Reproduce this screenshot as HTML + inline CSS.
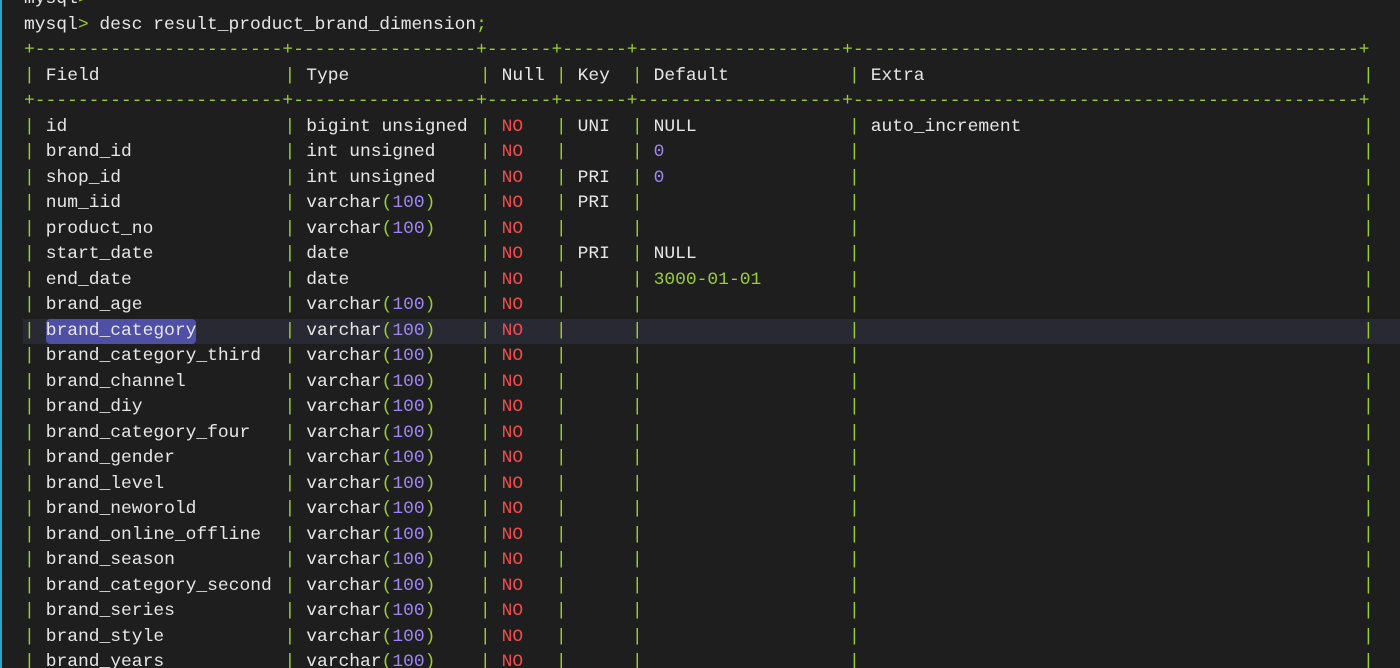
<!DOCTYPE html>
<html><head><meta charset="utf-8"><style>
html,body{margin:0;padding:0;background:#1e1e1e;width:1400px;height:668px;overflow:hidden}
body{position:relative;font-family:"Liberation Mono",monospace;font-size:17.95px;color:#e6e6e6}
.edge{position:absolute;left:0;top:0;width:2px;height:668px;background:#2fa3c6}
.w{position:absolute;left:0;top:3px;width:1400px;height:668px}
.r{position:absolute;left:0;width:1400px;height:25.5px;line-height:25.5px;white-space:pre}
.r span{position:absolute;top:0}
.g{color:#9acd32}.red{color:#f14c4c}.p{color:#9f87f5}
b{font-weight:normal}
.b0,.b1,.b2,.b3,.b4,.b5,.b6{color:#9acd32}
.b0{left:24px}.b1{left:284.5px}.b2{left:479.9px}.b3{left:555.9px}.b4{left:631.9px}.b5{left:849px}.b6{left:1363px}
.f{left:45.7px}.t{left:306.2px}.n{left:501.6px}.k{left:577.6px}.d{left:653.6px}.e{left:870.7px}
.hl{background:#292933}
.sel{background:#4f4fa6;border-radius:4px}
</style></head><body>
<div class="edge"></div>
<div class="w">
<div class="r" style="top:-16px"><span style="left:24px">mysql<span class="g" style="position:static">&gt;</span></span></div>
<div class="r" style="top:9.5px"><span style="left:24px">mysql<span class="g" style="position:static">&gt;</span> desc result_product_brand_dimension<span class="g" style="position:static">;</span></span></div>
<div class="r g" style="top:35px"><span style="left:24px">+-----------------------+-----------------+------+------+-------------------+-----------------------------------------------+</span></div>
<div class="r" style="top:60.5px"><span class="b0">|</span><span class="f">Field</span><span class="b1">|</span><span class="t">Type</span><span class="b2">|</span><span class="n">Null</span><span class="b3">|</span><span class="k">Key</span><span class="b4">|</span><span class="d">Default</span><span class="b5">|</span><span class="e">Extra</span><span class="b6">|</span></div>
<div class="r g" style="top:86px"><span style="left:24px">+-----------------------+-----------------+------+------+-------------------+-----------------------------------------------+</span></div>

<div class="r" style="top:111.5px"><span class="b0">|</span><span class="f">id</span><span class="b1">|</span><span class="t">bigint unsigned</span><span class="b2">|</span><span class="n red">NO</span><span class="b3">|</span><span class="k">UNI</span><span class="b4">|</span><span class="d">NULL</span><span class="b5">|</span><span class="e">auto_increment</span><span class="b6">|</span></div>
<div class="r" style="top:137px"><span class="b0">|</span><span class="f">brand_id</span><span class="b1">|</span><span class="t">int unsigned</span><span class="b2">|</span><span class="n red">NO</span><span class="b3">|</span><span class="b4">|</span><span class="d p">0</span><span class="b5">|</span><span class="b6">|</span></div>
<div class="r" style="top:162.5px"><span class="b0">|</span><span class="f">shop_id</span><span class="b1">|</span><span class="t">int unsigned</span><span class="b2">|</span><span class="n red">NO</span><span class="b3">|</span><span class="k">PRI</span><span class="b4">|</span><span class="d p">0</span><span class="b5">|</span><span class="b6">|</span></div>
<div class="r" style="top:188px"><span class="b0">|</span><span class="f">num_iid</span><span class="b1">|</span><span class="t">varchar<b class="g">(</b><b class="p">100</b><b class="g">)</b></span><span class="b2">|</span><span class="n red">NO</span><span class="b3">|</span><span class="k">PRI</span><span class="b4">|</span><span class="b5">|</span><span class="b6">|</span></div>
<div class="r" style="top:213.5px"><span class="b0">|</span><span class="f">product_no</span><span class="b1">|</span><span class="t">varchar<b class="g">(</b><b class="p">100</b><b class="g">)</b></span><span class="b2">|</span><span class="n red">NO</span><span class="b3">|</span><span class="b4">|</span><span class="b5">|</span><span class="b6">|</span></div>
<div class="r" style="top:239px"><span class="b0">|</span><span class="f">start_date</span><span class="b1">|</span><span class="t">date</span><span class="b2">|</span><span class="n red">NO</span><span class="b3">|</span><span class="k">PRI</span><span class="b4">|</span><span class="d">NULL</span><span class="b5">|</span><span class="b6">|</span></div>
<div class="r" style="top:264.5px"><span class="b0">|</span><span class="f">end_date</span><span class="b1">|</span><span class="t">date</span><span class="b2">|</span><span class="n red">NO</span><span class="b3">|</span><span class="b4">|</span><span class="d g">3000-01-01</span><span class="b5">|</span><span class="b6">|</span></div>
<div class="r" style="top:290px"><span class="b0">|</span><span class="f">brand_age</span><span class="b1">|</span><span class="t">varchar<b class="g">(</b><b class="p">100</b><b class="g">)</b></span><span class="b2">|</span><span class="n red">NO</span><span class="b3">|</span><span class="b4">|</span><span class="b5">|</span><span class="b6">|</span></div>
<div class="r hl" style="top:315.5px;left:23px;width:1377px"><span class="b0" style="left:1px">|</span><span class="f sel" style="left:22.7px">brand_category</span><span class="b1" style="left:261.5px">|</span><span class="t" style="left:283.2px">varchar<b class="g">(</b><b class="p">100</b><b class="g">)</b></span><span class="b2" style="left:456.9px">|</span><span class="n red" style="left:478.6px">NO</span><span class="b3" style="left:532.9px">|</span><span class="b4" style="left:608.9px">|</span><span class="b5" style="left:826px">|</span><span class="b6" style="left:1340px">|</span></div>
<div class="r" style="top:341px"><span class="b0">|</span><span class="f">brand_category_third</span><span class="b1">|</span><span class="t">varchar<b class="g">(</b><b class="p">100</b><b class="g">)</b></span><span class="b2">|</span><span class="n red">NO</span><span class="b3">|</span><span class="b4">|</span><span class="b5">|</span><span class="b6">|</span></div>
<div class="r" style="top:366.5px"><span class="b0">|</span><span class="f">brand_channel</span><span class="b1">|</span><span class="t">varchar<b class="g">(</b><b class="p">100</b><b class="g">)</b></span><span class="b2">|</span><span class="n red">NO</span><span class="b3">|</span><span class="b4">|</span><span class="b5">|</span><span class="b6">|</span></div>
<div class="r" style="top:392px"><span class="b0">|</span><span class="f">brand_diy</span><span class="b1">|</span><span class="t">varchar<b class="g">(</b><b class="p">100</b><b class="g">)</b></span><span class="b2">|</span><span class="n red">NO</span><span class="b3">|</span><span class="b4">|</span><span class="b5">|</span><span class="b6">|</span></div>
<div class="r" style="top:417.5px"><span class="b0">|</span><span class="f">brand_category_four</span><span class="b1">|</span><span class="t">varchar<b class="g">(</b><b class="p">100</b><b class="g">)</b></span><span class="b2">|</span><span class="n red">NO</span><span class="b3">|</span><span class="b4">|</span><span class="b5">|</span><span class="b6">|</span></div>
<div class="r" style="top:443px"><span class="b0">|</span><span class="f">brand_gender</span><span class="b1">|</span><span class="t">varchar<b class="g">(</b><b class="p">100</b><b class="g">)</b></span><span class="b2">|</span><span class="n red">NO</span><span class="b3">|</span><span class="b4">|</span><span class="b5">|</span><span class="b6">|</span></div>
<div class="r" style="top:468.5px"><span class="b0">|</span><span class="f">brand_level</span><span class="b1">|</span><span class="t">varchar<b class="g">(</b><b class="p">100</b><b class="g">)</b></span><span class="b2">|</span><span class="n red">NO</span><span class="b3">|</span><span class="b4">|</span><span class="b5">|</span><span class="b6">|</span></div>
<div class="r" style="top:494px"><span class="b0">|</span><span class="f">brand_neworold</span><span class="b1">|</span><span class="t">varchar<b class="g">(</b><b class="p">100</b><b class="g">)</b></span><span class="b2">|</span><span class="n red">NO</span><span class="b3">|</span><span class="b4">|</span><span class="b5">|</span><span class="b6">|</span></div>
<div class="r" style="top:519.5px"><span class="b0">|</span><span class="f">brand_online_offline</span><span class="b1">|</span><span class="t">varchar<b class="g">(</b><b class="p">100</b><b class="g">)</b></span><span class="b2">|</span><span class="n red">NO</span><span class="b3">|</span><span class="b4">|</span><span class="b5">|</span><span class="b6">|</span></div>
<div class="r" style="top:545px"><span class="b0">|</span><span class="f">brand_season</span><span class="b1">|</span><span class="t">varchar<b class="g">(</b><b class="p">100</b><b class="g">)</b></span><span class="b2">|</span><span class="n red">NO</span><span class="b3">|</span><span class="b4">|</span><span class="b5">|</span><span class="b6">|</span></div>
<div class="r" style="top:570.5px"><span class="b0">|</span><span class="f">brand_category_second</span><span class="b1">|</span><span class="t">varchar<b class="g">(</b><b class="p">100</b><b class="g">)</b></span><span class="b2">|</span><span class="n red">NO</span><span class="b3">|</span><span class="b4">|</span><span class="b5">|</span><span class="b6">|</span></div>
<div class="r" style="top:596px"><span class="b0">|</span><span class="f">brand_series</span><span class="b1">|</span><span class="t">varchar<b class="g">(</b><b class="p">100</b><b class="g">)</b></span><span class="b2">|</span><span class="n red">NO</span><span class="b3">|</span><span class="b4">|</span><span class="b5">|</span><span class="b6">|</span></div>
<div class="r" style="top:621.5px"><span class="b0">|</span><span class="f">brand_style</span><span class="b1">|</span><span class="t">varchar<b class="g">(</b><b class="p">100</b><b class="g">)</b></span><span class="b2">|</span><span class="n red">NO</span><span class="b3">|</span><span class="b4">|</span><span class="b5">|</span><span class="b6">|</span></div>
<div class="r" style="top:647px"><span class="b0">|</span><span class="f">brand_years</span><span class="b1">|</span><span class="t">varchar<b class="g">(</b><b class="p">100</b><b class="g">)</b></span><span class="b2">|</span><span class="n red">NO</span><span class="b3">|</span><span class="b4">|</span><span class="b5">|</span><span class="b6">|</span></div>
</div>
</body></html>
